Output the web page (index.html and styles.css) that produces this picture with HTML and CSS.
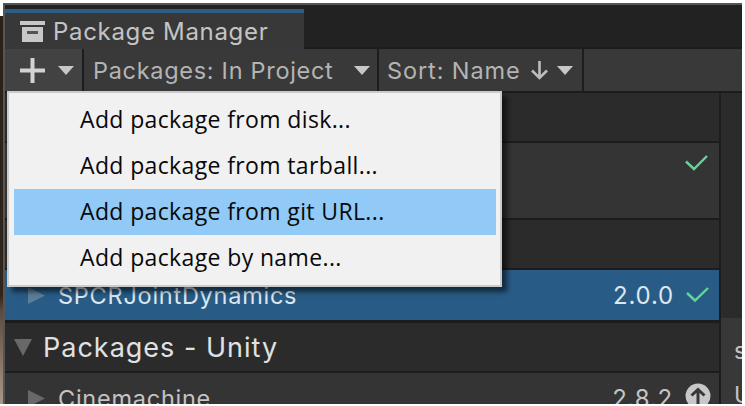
FILE: index.html
```html
<!DOCTYPE html>
<html lang="en">
<head>
<meta charset="utf-8">
<title>Package Manager</title>
<link rel="stylesheet" href="styles.css">
</head>
<body>
<div class="desktop">
  <div class="backdrop"></div>
  <main class="window">
    <header class="tabs">
      <div class="tab">
        <svg class="tab-icon" width="26" height="22" viewBox="0 0 26 22"><path fill="#c8c8c8" d="M0 0h25v4H0zM2 6h21v15H2z"/><path fill="#555" d="M7 10h11v3H7z"/></svg>
        <span class="tab-title">Package Manager</span>
      </div>
    </header>
    <nav class="toolbar">
      <div class="tool add">
        <svg width="25" height="25" viewBox="0 0 25 25"><path fill="#d2d2d2" d="M10.500 0h4v10.500H25v4H14.500V25h-4V14.500H0v-4h10.500z"/></svg>
        <svg class="caret" width="16" height="9" viewBox="0 0 16 9"><path d="M0 0h16L8 9z"/></svg>
      </div>
      <div class="tool scope"><span class="label scope-label">Packages: In Project</span>
        <svg class="caret" width="16" height="9" viewBox="0 0 16 9"><path d="M0 0h16L8 9z"/></svg>
      </div>
      <div class="tool sort"><span class="label sort-label">Sort: Name</span>
        <svg class="arrow" width="17" height="19" viewBox="0 0 17 19"><path fill="none" stroke="#bdbdbd" stroke-width="2.6" d="M8.500 0v17M1 9.500l7.500 7.500 7.500-7.500"/></svg>
        <svg class="caret" width="16" height="9" viewBox="0 0 16 9"><path d="M0 0h16L8 9z"/></svg>
      </div>
    </nav>
    <div class="content">
      <section class="list">
        <div class="row group"></div>
        <div class="row tall"><svg class="check" width="23" height="16" viewBox="0 0 23 16"><path d="M1 6.500l8 7.500L22 1"/></svg></div>
        <div class="row group"></div>
        <div class="row selected">
          <svg class="fold" width="17" height="17" viewBox="0 0 17 17"><path d="M0 0l17 8.500L0 17z"/></svg>
          <span class="name name-spcr">SPCRJointDynamics</span><span class="version">2.0.0</span>
          <svg class="check" width="23" height="16" viewBox="0 0 23 16"><path d="M1 6l8 7.500L22 1"/></svg>
        </div>
        <div class="row group heading">
          <svg class="fold" width="18" height="17" viewBox="0 0 18 17"><path d="M0 0h18L9 17z"/></svg>
          <span class="title">Packages - Unity</span>
        </div>
        <div class="row package">
          <svg class="fold" width="17" height="17" viewBox="0 0 17 17"><path d="M0 0l17 8.500L0 17z"/></svg>
          <span class="name name-cine">Cinemachine</span><span class="version">2.8.2</span>
          <svg class="update" width="26" height="26" viewBox="0 0 26 26"><circle cx="13" cy="13" r="12.500" fill="#c8c8c8"/><path fill="none" stroke="#383838" stroke-width="3" d="M13 21V7M6.500 12.500L13 6.500l6.500 6"/></svg>
        </div>
      </section>
      <aside class="details">
        <div class="details-top"></div>
        <div class="details-body"><span>s</span><span>U</span></div>
      </aside>
    </div>
  </main>
  <div class="menu">
    <div class="item">Add package from disk...</div>
    <div class="item">Add package from tarball...</div>
    <div class="item active">Add package from git URL...</div>
    <div class="item">Add package by name...</div>
  </div>
</div>
</body>
</html>
```
FILE: styles.css
```css
* { box-sizing: border-box; }
body { margin: 0; background: #fff; font-family: Inter, sans-serif; overflow: hidden; }
svg { display: block; flex: none; }
.desktop { position: relative; display: flex; width: 742px; height: 404px; padding-top: 3px; }
.backdrop { width: 3px; margin-top: 13px; background: linear-gradient(#2b2119 0, #30251c 72%, #594b40 76%, #8c7768 90%, #a8988a 100%); }
.window { display: flex; flex-direction: column; width: 739px; height: 401px; overflow: hidden; border: solid #555; border-width: 2px 0 0 2px; background: #222; color: #c4c4c4; }
.tabs { flex: none; height: 44px; padding-top: 4px; background: linear-gradient(#222 42px, #1c1c1c 42px); }
.tab { display: flex; align-items: center; width: 299px; height: 40px; padding-left: 15px; border-top: 4px solid #2c5d87; background: #383838; }
.tab-icon { margin-top: 1px; }
.tab-title { margin: 1px 0 0 7px; font-size: 24px; line-height: 30px; white-space: nowrap; letter-spacing: .68px; }
.toolbar { display: flex; flex: none; height: 44px; border-bottom: 2px solid #1c1c1c; background: #393939; }
.tool { display: flex; align-items: center; border-right: 2px solid #1d1d1d; white-space: nowrap; }
.add { width: 79px; padding-left: 15px; gap: 13px; background: #424242; }
.caret { fill: #c8c8c8; }
.scope { width: 295px; padding: 0 7px 0 9px; justify-content: space-between; }
.sort { width: 205px; padding: 0 9px 0 8px; }
.arrow { margin: 0 9px 0 auto; }
.label { font-size: 23.5px; line-height: 30px; color: #b4b4b4; margin-top: 2px; }
.scope-label { letter-spacing: .7px; }
.sort-label { letter-spacing: .9px; }
.content { display: flex; flex: 1; min-height: 0; }
.list { width: 716px; border-right: 2px solid #1c1c1c; }
.row { display: flex; align-items: center; border-bottom: 2px solid #1c1c1c; background: #343434; white-space: nowrap; }
.group { height: 50px; background: #2b2b2b; }
.row.tall { height: 77px; justify-content: flex-end; align-items: flex-start; padding: 12px 11px; }
.selected { height: 53px; padding: 0 10px 0 23px; border-bottom-width: 3px; background: #285c87; color: #dce7ef; }
.check { fill: none; stroke: #65d49b; stroke-width: 2.4; }
.fold { fill: #686868; }
.selected .fold { fill: #5d7e99; }
.name { margin: 2px 0 0 13px; font-size: 23.5px; line-height: 30px; letter-spacing: .75px; }
.version { margin: 2px 0 0 auto; font-size: 24px; line-height: 30px; letter-spacing: .8px; }
.selected .check { margin-left: 12px; }
.heading { padding-left: 9px; }
.title { margin: 1px 0 0 11px; font-size: 27px; line-height: 34px; letter-spacing: 1px; color: #e1e1e1; }
.package { height: 52px; padding: 0 8px 0 23px; }
.update { margin: -4px 0 0 12px; }
.details { width: 21px; overflow: hidden; }
.details-top { height: 225px; background: #2b2b2b; }
.details-body { display: flex; flex-direction: column; gap: 14px; height: 90px; padding: 18px 0 0 13px; background: #383838; font-size: 23px; line-height: 30px; }
.menu { position: absolute; top: 91px; left: 7px; width: 495px; height: 196px; padding: 4px; border: 2px solid #cbcbcb; background: #f1f1f1; box-shadow: 5px 5px 5px rgba(0,0,0,.55); color: #080808; font-family: "Open Sans", "Noto Sans", sans-serif; }
.item { display: flex; align-items: center; height: 46px; margin-left: 1px; padding: 0 0 2px 66px; font-size: 23px; line-height: 32px; letter-spacing: .37px; white-space: nowrap; }
.active { background: #91c9f7; }
```
